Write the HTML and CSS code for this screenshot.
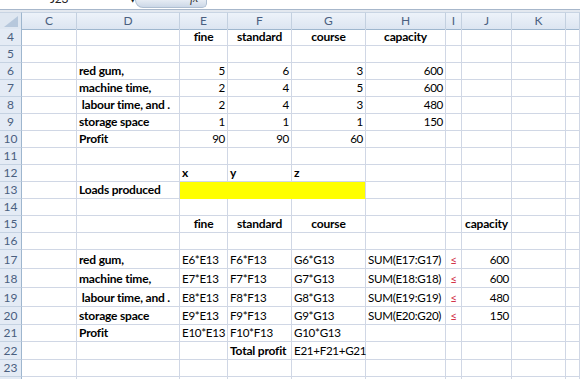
FILE: index.html
```html
<!DOCTYPE html>
<html>
<head>
<meta charset="utf-8">
<link rel="stylesheet" href="styles.css">
</head>
<body>
<div class="fbar">
  <div class="namebox"><span class="nbtext">J23</span><span class="arrow">▼</span></div>
  <div class="fxbtn"><span class="fx">fx</span></div>
  <div class="finput"></div>
</div>
<div class="fgap"></div>
<div class="sheet">
  <div class="row hdr">
    <div class="corner"><svg width="14" height="11" viewBox="0 0 14 11"><polygon points="14,0 14,11 0,11" fill="#b7c8dc"/></svg></div>
    <div class="ch">C</div><div class="ch">D</div><div class="ch">E</div><div class="ch">F</div><div class="ch">G</div><div class="ch">H</div><div class="ch">I</div><div class="ch">J</div><div class="ch">K</div><div class="ch"></div>
  </div>
  <div class="row h17"><div class="rh">4</div><div></div><div></div><div class="b c">fine</div><div class="b c">standard</div><div class="b c">course</div><div class="b c">capacity</div><div></div><div></div><div></div><div></div></div>
  <div class="row h17"><div class="rh">5</div><div></div><div></div><div></div><div></div><div></div><div></div><div></div><div></div><div></div><div></div></div>
  <div class="row h17"><div class="rh">6</div><div></div><div class="b">red gum,</div><div class="n">5</div><div class="n">6</div><div class="n">3</div><div class="n">600</div><div></div><div></div><div></div><div></div></div>
  <div class="row h17"><div class="rh">7</div><div></div><div class="b">machine time,</div><div class="n">2</div><div class="n">4</div><div class="n">5</div><div class="n">600</div><div></div><div></div><div></div><div></div></div>
  <div class="row h17"><div class="rh">8</div><div></div><div class="b pre"> labour time, and .</div><div class="n">2</div><div class="n">4</div><div class="n">3</div><div class="n">480</div><div></div><div></div><div></div><div></div></div>
  <div class="row h17"><div class="rh">9</div><div></div><div class="b">storage space</div><div class="n">1</div><div class="n">1</div><div class="n">1</div><div class="n">150</div><div></div><div></div><div></div><div></div></div>
  <div class="row h17"><div class="rh">10</div><div></div><div class="b">Profit</div><div class="n">90</div><div class="n">90</div><div class="n">60</div><div></div><div></div><div></div><div></div><div></div></div>
  <div class="row h17"><div class="rh">11</div><div></div><div></div><div></div><div></div><div></div><div></div><div></div><div></div><div></div><div></div></div>
  <div class="row h17"><div class="rh">12</div><div></div><div></div><div class="b">x</div><div class="b">y</div><div class="b">z</div><div></div><div></div><div></div><div></div><div></div></div>
  <div class="row h17"><div class="rh">13</div><div></div><div class="b">Loads produced</div><div class="yel"></div><div class="yel"></div><div class="yel last"></div><div></div><div></div><div></div><div></div><div></div></div>
  <div class="row h17"><div class="rh">14</div><div></div><div></div><div></div><div></div><div></div><div></div><div></div><div></div><div></div><div></div></div>
  <div class="row h17"><div class="rh">15</div><div></div><div></div><div class="b c">fine</div><div class="b c">standard</div><div class="b c">course</div><div></div><div></div><div class="b c">capacity</div><div></div><div></div></div>
  <div class="row h17"><div class="rh">16</div><div></div><div></div><div></div><div></div><div></div><div></div><div></div><div></div><div></div><div></div></div>
  <div class="row h19"><div class="rh">17</div><div></div><div class="b">red gum,</div><div>E6*E13</div><div>F6*F13</div><div>G6*G13</div><div>SUM(E17:G17)</div><div class="le">≤</div><div class="n">600</div><div></div><div></div></div>
  <div class="row h19"><div class="rh">18</div><div></div><div class="b">machine time,</div><div>E7*E13</div><div>F7*F13</div><div>G7*G13</div><div>SUM(E18:G18)</div><div class="le">≤</div><div class="n">600</div><div></div><div></div></div>
  <div class="row h19"><div class="rh">19</div><div></div><div class="b pre"> labour time, and .</div><div>E8*E13</div><div>F8*F13</div><div>G8*G13</div><div>SUM(E19:G19)</div><div class="le">≤</div><div class="n">480</div><div></div><div></div></div>
  <div class="row h18"><div class="rh">20</div><div></div><div class="b">storage space</div><div>E9*E13</div><div>F9*F13</div><div>G9*G13</div><div>SUM(E20:G20)</div><div class="le">≤</div><div class="n">150</div><div></div><div></div></div>
  <div class="row h17"><div class="rh">21</div><div></div><div class="b">Profit</div><div>E10*E13</div><div>F10*F13</div><div>G10*G13</div><div></div><div></div><div></div><div></div><div></div></div>
  <div class="row h18"><div class="rh">22</div><div></div><div></div><div></div><div class="b">Total profit</div><div>E21+F21+G21</div><div></div><div></div><div></div><div></div><div></div></div>
  <div class="row h17"><div class="rh">23</div><div></div><div></div><div></div><div></div><div></div><div></div><div></div><div></div><div></div><div></div></div>
  <div class="row h17"><div class="rh">24</div><div></div><div></div><div></div><div></div><div></div><div></div><div></div><div></div><div></div><div></div></div>
</div>
</body>
</html>
```

FILE: styles.css
```css
* { box-sizing: border-box; margin: 0; padding: 0; }
html, body { width: 580px; height: 379px; overflow: hidden; background: #fff; }
body { font-family: Lato, "Open Sans", "DejaVu Sans", sans-serif; font-size: 11.6px; letter-spacing: -0.3px; color: #000; }

.fbar { display: flex; height: 10px; overflow: hidden; border-bottom: 1px solid #a7b7cb; background: #fff; }
.namebox { width: 135px; display: flex; align-items: flex-start; }
.nbtext { margin-left: 50px; margin-top: -9px; line-height: 15px; font-size: 12px; color: #222; }
.arrow { margin-left: 62px; margin-top: -5px; font-size: 7px; line-height: 8px; color: #222; }
.fxbtn { width: 72px; height: 8px; border-radius: 0 0 6px 10px; background: linear-gradient(#e6ecf4, #ccd8e7); border: 1px solid #afbfd2; border-top: none; display: flex; justify-content: flex-end; }
.fx { margin-right: 8px; margin-top: -9px; line-height: 15px; font-style: italic; font-family: "Liberation Serif", serif; font-size: 12px; color: #333; }
.finput { flex: 1; }
.fgap { height: 2px; background: #e3e8ef; }

.sheet { display: flex; flex-direction: column; }
.row { display: grid; grid-template-columns: 22px 55px 103px 48px 64px 74px 80px 16px 50px 54px 1fr; }
.h17 { height: 17px; }
.h18 { height: 18px; }
.h19 { height: 19px; }
.row > div { border-right: 1px solid #d0d7e5; border-bottom: 1px solid #d0d7e5; display: flex; align-items: flex-end; padding: 0 2px 1px 2px; line-height: 15px; white-space: nowrap; overflow: visible; }

.hdr { height: 17px; background: linear-gradient(#eef3fa, #dce5f1); }
.hdr > div { border-right: 1px solid #c3d0e0; border-bottom: 1px solid #9eb6ce; border-top: 1px solid #c8d4e3; justify-content: center; align-items: center; color: #4a5f80; font-size: 12px; letter-spacing: 0; }
.hdr > .corner { background: #dfe7f1; border-right: 1px solid #9eb6ce; justify-content: flex-end; align-items: flex-end; padding: 0 3px 2px 0; }

.row > .rh { background: #e4ebf5; border-right: 1px solid #9eb6ce; border-bottom: 1px solid #c5d2e2; justify-content: center; color: #4a5f80; font-size: 12px; letter-spacing: 0; padding: 0 0 1px 0; }

.row > .b { font-weight: 700; font-size: 12px; letter-spacing: -0.2px; }
.row > .c { justify-content: center; }
.row > .n { justify-content: flex-end; }
.row > .pre { white-space: pre; }
.row > .le { justify-content: center; color: #d2344a; padding: 0 0 1px 0; letter-spacing: 0; }
.row > .yel { background: #ffff00; border-right-color: #ffff00; border-bottom-color: #ffff00; }
.row > .yel.last { border-right-color: #d0d7e5; }
```
